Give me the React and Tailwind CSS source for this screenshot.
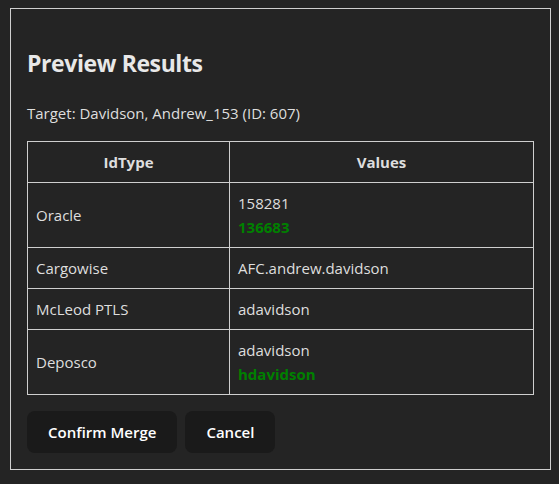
import React from "react";

const rows = [
  { idType: "Oracle", values: ["158281"], added: "136683" },
  { idType: "Cargowise", values: ["AFC.andrew.davidson"] },
  { idType: "McLeod PTLS", values: ["adavidson"] },
  { idType: "Deposco", values: ["adavidson"], added: "hdavidson" },
];

const App = () => {
  return (
    <div
      className="min-h-screen bg-[#242424] text-[#dedede] text-[16px] leading-6 pt-2 pl-[10px]"
      style={{ fontFamily: '"Open Sans", "Noto Sans", sans-serif' }}
    >
      <div className="w-[541px] border border-[#cfcfcf] p-4">
        <h2 className="text-[23px] tracking-[-0.4px] font-bold leading-9 mt-5 mb-5 text-[#e8e8e8]">
          Preview Results
        </h2>
        <p className="text-[15px] mb-4">Target: Davidson, Andrew_153 (ID: 607)</p>

        <table className="w-full border-collapse text-[15px]">
          <thead>
            <tr>
              <th className="w-[202px] border border-[#cfcfcf] px-2 py-2 font-bold text-center">
                IdType
              </th>
              <th className="border border-[#cfcfcf] px-2 py-2 font-bold text-center">
                Values
              </th>
            </tr>
          </thead>
          <tbody>
            {rows.map((row) => (
              <tr key={row.idType}>
                <td className="border border-[#cfcfcf] px-2 py-2 align-middle">{row.idType}</td>
                <td className="border border-[#cfcfcf] px-2 py-2">
                  {row.values.map((v) => (
                    <div key={v}>{v}</div>
                  ))}
                  {row.added && (
                    <div className="font-bold text-[#008000]">{row.added}</div>
                  )}
                </td>
              </tr>
            ))}
          </tbody>
        </table>

        <div className="mt-4 flex gap-2">
          <button className="rounded-lg bg-[#1a1a1a] px-[21px] py-[9px] font-semibold text-white text-[15px]">
            Confirm Merge
          </button>
          <button className="rounded-lg bg-[#1a1a1a] px-[21px] py-[9px] font-semibold text-white text-[15px]">
            Cancel
          </button>
        </div>
      </div>
    </div>
  );
};

export default App;
